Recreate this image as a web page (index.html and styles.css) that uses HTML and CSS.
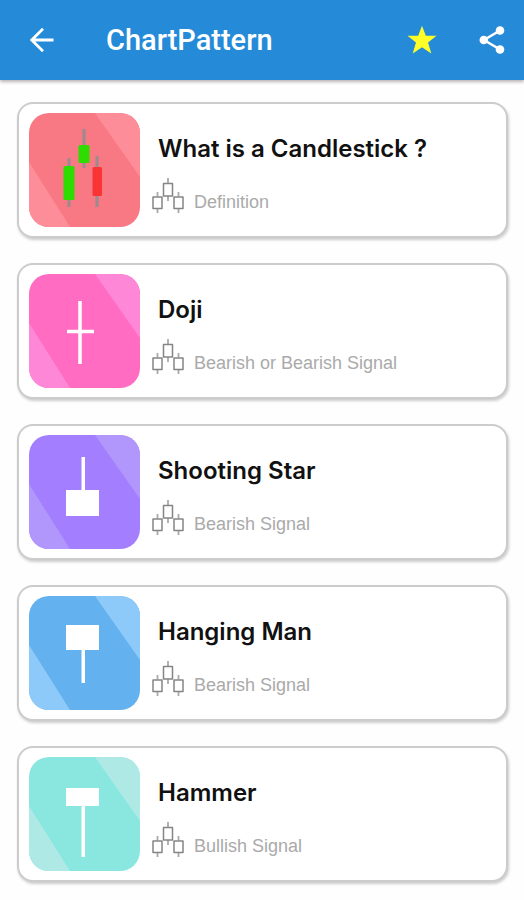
FILE: index.html
```html
<!DOCTYPE html>
<html lang="en">
<head>
	<meta charset="utf-8">
	<meta name="viewport" content="width=device-width, initial-scale=1">
	<title>ChartPattern</title>
	<link rel="stylesheet" href="styles.css">
</head>
<body>

<!-- shared shapes -->
<svg class="defs" width="0" height="0" aria-hidden="true">
	<symbol id="candles" viewBox="0 0 32 35">
		<path d="M5.500 14v4.500M5.500 31v4M16 0v5M16 18v5M26.500 14v4.500M26.500 31v4" stroke="#aaa" stroke-width="1.800"/>
		<path d="M1 19h9v11.500H1zM11.500 5.500h9V18h-9zM22 19h9v11.500h-9z" fill="none" stroke="#858585" stroke-width="1.500" stroke-linejoin="round"/>
	</symbol>
	<symbol id="shine" viewBox="0 0 111 114">
		<path d="M66 0H111V64ZM0 49L41 114H0Z"/>
	</symbol>
</svg>

<header class="topbar">
	<a class="back" href="#" aria-label="Back">
		<svg width="24" height="24" viewBox="0 0 24 24" fill="none" stroke="#fff" stroke-width="2.800"><path d="M23.500 12H2M13 .8L1.800 12L13 23.200"/></svg>
	</a>
	<h1>ChartPattern</h1>
	<button class="icon-button" type="button" aria-label="Favorite">
		<svg width="30" height="30" viewBox="0 0 30 30"><path fill="#ffff27" d="M15 .8L18.800 10.800H29.500L21 17.500L24.300 28.500L15 22.200L5.700 28.500L9 17.500L.5 10.800H11.200Z"/></svg>
	</button>
	<button class="icon-button" type="button" aria-label="Share">
		<svg width="26" height="28" viewBox="0 0 26 28" fill="#fff"><path d="M21 4.500L5 14L21 23.500" fill="none" stroke="#fff" stroke-width="2.600"/><circle cx="21" cy="4.500" r="4.300"/><circle cx="4.800" cy="14" r="4.300"/><circle cx="21" cy="23.500" r="4.300"/></svg>
	</button>
</header>

<main class="list">
	<a class="card" href="#">
		<svg class="tile red" viewBox="0 0 111 114">
			<use href="#shine"/>
			<path d="M40 45v49M55 16v39M68 43v51" stroke="#9b8b8d" stroke-width="3"/>
			<rect x="34.500" y="53" width="11" height="34" rx="1.500" fill="#2fdc00"/>
			<rect x="49.500" y="32" width="11" height="18" rx="1.500" fill="#2fdc00"/>
			<rect x="63.500" y="54" width="9.500" height="29" rx="1.500" fill="#f83434"/>
		</svg>
		<div class="info">
			<h2>What is a Candlestick ?</h2>
			<p><svg class="candles"><use href="#candles"/></svg>Definition</p>
		</div>
	</a>
	<a class="card" href="#">
		<svg class="tile pink" viewBox="0 0 111 114">
			<use href="#shine"/>
			<path d="M51 27v63M38 57.500h27" stroke="#fff" stroke-width="3.500"/>
		</svg>
		<div class="info">
			<h2>Doji</h2>
			<p><svg class="candles"><use href="#candles"/></svg>Bearish or Bearish Signal</p>
		</div>
	</a>
	<a class="card" href="#">
		<svg class="tile purple" viewBox="0 0 111 114">
			<use href="#shine"/>
			<path d="M52.500 22h3.500V55H70V81H37V55H52.500Z" fill="#fff"/>
		</svg>
		<div class="info">
			<h2>Shooting Star</h2>
			<p><svg class="candles"><use href="#candles"/></svg>Bearish Signal</p>
		</div>
	</a>
	<a class="card" href="#">
		<svg class="tile blue" viewBox="0 0 111 114">
			<use href="#shine"/>
			<path d="M37 29H70V54H56V87H52.500V54H37Z" fill="#fff"/>
		</svg>
		<div class="info">
			<h2>Hanging Man</h2>
			<p><svg class="candles"><use href="#candles"/></svg>Bearish Signal</p>
		</div>
	</a>
	<a class="card" href="#">
		<svg class="tile teal" viewBox="0 0 111 114">
			<use href="#shine"/>
			<path d="M37 31H70V49H56V100H52.500V49H37Z" fill="#fff"/>
		</svg>
		<div class="info">
			<h2>Hammer</h2>
			<p><svg class="candles"><use href="#candles"/></svg>Bullish Signal</p>
		</div>
	</a>
</main>

</body>
</html>
```

FILE: styles.css
```css
* {
	box-sizing: border-box;
}
body {
	margin: 0;
	background: #fefefe;
	font-family: "Liberation Sans", Arial, sans-serif;
}
h1, h2, p {
	margin: 0;
}
svg {
	display: block;
	flex: none;
}
.defs {
	display: none;
}

/* top bar */
.topbar {
	display: flex;
	align-items: center;
	height: 80px;
	padding: 0 19px 0 30px;
	background: #258bd8;
	box-shadow: 0 2px 3px rgba(60, 40, 50, 0.35);
}
.topbar h1 {
	flex: 1;
	margin-left: 52px;
	color: #fff;
	font: 500 29px/36px Roboto, sans-serif;
}
.icon-button {
	padding: 0;
	border: 0;
	background: none;
}
.icon-button + .icon-button {
	margin-left: 42px;
}

/* pattern list */
.list {
	display: flex;
	flex-direction: column;
	gap: 25px;
	padding: 22px 16px 16px 17px;
}
.card {
	display: flex;
	padding: 9px 10px;
	border: 2px solid #ccc;
	border-radius: 16px;
	background: #fff;
	box-shadow: 1px 2px 3px rgba(0, 0, 0, 0.2);
	color: #111;
	text-decoration: none;
}
.tile {
	width: 111px;
	height: 114px;
	border-radius: 20px;
}
.info {
	margin-left: 12px;
	padding-top: 22px;
}
.info h2 {
	padding-left: 6px;
	font: 600 24px/28px Inter, sans-serif;
}
.info p {
	display: flex;
	align-items: flex-end;
	gap: 10px;
	margin-top: 15px;
	color: #aaa;
	font-size: 18px;
	line-height: 22px;
}
.candles {
	width: 32px;
	height: 35px;
}

/* tile colours: background is the tile, fill is the shine */
.red { background: #f87984; fill: #fd8e99; }
.pink { background: #ff6cc2; fill: #ff87d7; }
.purple { background: #a37fff; fill: #b196fc; }
.blue { background: #63b1ee; fill: #8dcaf9; }
.teal { background: #8ae7e0; fill: #aee9e5; }
```
